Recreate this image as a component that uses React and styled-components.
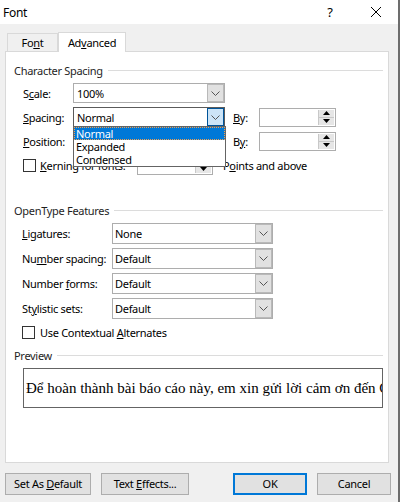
import React from "react";
import styled, { createGlobalStyle } from "styled-components";

const GlobalStyle = createGlobalStyle`
  html, body {
    margin: 0;
    padding: 0;
  }
  body {
    font-family: "Noto Sans", sans-serif;
    font-size: 11px;
    letter-spacing: -0.3px;
    color: #000;
    background: #f0f0f0;
  }
`;

const Window = styled.div`
  width: 400px;
  height: 502px;
  box-sizing: border-box;
  display: flex;
  flex-direction: column;
  background: #f0f0f0;
  border-right: 2px solid #6d6d6d;
  overflow: hidden;
`;

const TitleBar = styled.div`
  height: 24px;
  flex: none;
  background: #fff;
  display: flex;
  align-items: center;
  padding-left: 3px;
  font-size: 12px;
`;

const Title = styled.div`
  flex: 1;
`;

const HelpMark = styled.div`
  width: 10px;
  margin-right: 35px;
  text-align: center;
  font-size: 13px;
`;

const CloseMark = styled.div`
  width: 12px;
  height: 12px;
  margin-right: 16px;
  display: flex;
`;

const Body = styled.div`
  flex: 1;
  display: flex;
  flex-direction: column;
  padding: 8px 0 0 5px;
`;

const Tabs = styled.div`
  display: flex;
  align-items: flex-end;
  height: 20px;
  padding-left: 2px;
`;

const Tab = styled.div`
  position: relative;
  z-index: ${(p) => (p.$active ? 1 : 0)};
  box-sizing: border-box;
  width: ${(p) => p.$w}px;
  height: ${(p) => (p.$active ? 20 : 18)}px;
  margin-bottom: ${(p) => (p.$active ? 0 : 1)}px;
  border: 1px solid #d9d9d9;
  border-bottom: none;
  background: ${(p) => (p.$active ? "#fff" : "#f0f0f0")};
  display: flex;
  align-items: center;
  justify-content: center;
  padding-bottom: 1px;
`;

const Panel = styled.div`
  width: 384px;
  height: 412px;
  margin-top: -1px;
  box-sizing: border-box;
  border: 1px solid #d9d9d9;
  background: #fff;
  padding: 10px 5px 0 8px;
  display: flex;
  flex-direction: column;
`;

const SectionHead = styled.div`
  display: flex;
  align-items: center;
  gap: 5px;
  height: 16px;
  margin-top: ${(p) => p.$mt || 0}px;
  color: #1e1e1e;
  &::after {
    content: "";
    flex: 1;
    height: 1px;
    background: #dcdcdc;
  }
`;

const Fields = styled.div`
  display: flex;
  flex-direction: column;
  gap: ${(p) => p.$gap}px;
  margin: ${(p) => p.$mt}px 0 0 ${(p) => p.$ml}px;
`;

const Row = styled.div`
  display: flex;
  align-items: center;
  height: ${(p) => p.$h}px;
`;

const Label = styled.div`
  flex: none;
  width: ${(p) => p.$w}px;
  margin-left: ${(p) => p.$ml || 0}px;
  white-space: nowrap;
`;

const Key = styled.span`
  text-decoration: underline;
  text-underline-offset: 1px;
`;

const ComboWrap = styled.div`
  position: relative;
`;

const ComboBox = styled.div`
  width: ${(p) => p.$w}px;
  height: ${(p) => p.$h}px;
  box-sizing: border-box;
  border: 1px solid ${(p) => (p.$focus ? "#5a5a5a" : "#adadad")};
  background: #fff;
  display: flex;
  align-items: stretch;
`;

const ComboValue = styled.div`
  flex: 1;
  display: flex;
  align-items: center;
  padding-left: ${(p) => p.$pl || 3}px;
`;

const DropButton = styled.div`
  width: 17px;
  box-sizing: border-box;
  border: 1px solid ${(p) => (p.$focus ? "#005499" : "#b9b9b9")};
  background: ${(p) => (p.$focus ? "#cce4f7" : "#e1e1e1")};
  display: flex;
  align-items: center;
  justify-content: center;
`;

const DropList = styled.div`
  position: absolute;
  z-index: 2;
  left: 0;
  top: calc(100% - 1px);
  width: 153px;
  box-sizing: border-box;
  border: 1px solid #646464;
  background: #fff;
  display: flex;
  flex-direction: column;
`;

const DropItem = styled.div`
  height: 13px;
  line-height: 13px;
  padding-left: 2px;
  background: ${(p) => (p.$selected ? "#0078d7" : "transparent")};
  color: ${(p) => (p.$selected ? "#fff" : "#000")};
  outline: ${(p) => (p.$selected ? "1px dotted #f0a050" : "none")};
  outline-offset: -1px;
`;

const SpinBox = styled.div`
  width: ${(p) => p.$w}px;
  height: ${(p) => p.$h}px;
  box-sizing: border-box;
  border: 1px solid #adadad;
  background: #fff;
  display: flex;
  justify-content: flex-end;
  padding: 1px;
`;

const SpinButtons = styled.div`
  width: 15px;
  display: flex;
  flex-direction: column;
  border-left: 1px solid #c8c8c8;
`;

const SpinHalf = styled.div`
  flex: 1;
  background: #e6e6e6;
  display: flex;
  align-items: center;
  justify-content: center;
  & + & {
    border-top: 1px solid #c8c8c8;
  }
`;

const CheckBox = styled.div`
  flex: none;
  width: 13px;
  height: 13px;
  box-sizing: border-box;
  border: 1px solid #333;
  background: #fff;
  margin-right: ${(p) => p.$mr}px;
`;

const PreviewBox = styled.div`
  width: 360px;
  height: 40px;
  margin: 5px 0 0 9px;
  box-sizing: border-box;
  border: 1px solid #646464;
  overflow: hidden;
  white-space: nowrap;
  display: flex;
  align-items: center;
  padding: 1px 0 0 2px;
  font-family: "Liberation Serif", serif;
  font-size: 15px;
  letter-spacing: 0;
`;

const ButtonRow = styled.div`
  display: flex;
  align-items: center;
  width: 386px;
  margin-top: 10px;
  gap: 10px;
`;

const Spacer = styled.div`
  flex: 1;
`;

const Button = styled.div`
  width: ${(p) => p.$w}px;
  height: 22px;
  box-sizing: border-box;
  border: ${(p) => (p.$primary ? "2px solid #0078d7" : "1px solid #adadad")};
  background: #e1e1e1;
  display: flex;
  align-items: center;
  justify-content: center;
  padding-bottom: 1px;
  white-space: pre;
`;

const Chevron = () => (
  <svg width="9" height="5" viewBox="0 0 9 5">
    <polyline points="0.5,0.5 4.5,4.5 8.5,0.5" fill="none" stroke="#555" strokeWidth="1" />
  </svg>
);

const Arrow = ({ up }) => (
  <svg width="7" height="4" viewBox="0 0 7 4">
    <polygon points={up ? "0,4 7,4 3.5,0" : "0,0 7,0 3.5,4"} fill="#000" />
  </svg>
);

const Combo = ({ w, h = 20, value, focus, pl }) => (
  <ComboBox $w={w} $h={h} $focus={focus}>
    <ComboValue $pl={pl}>{value}</ComboValue>
    <DropButton $focus={focus}>
      <Chevron />
    </DropButton>
  </ComboBox>
);

const Spin = ({ w, h = 19 }) => (
  <SpinBox $w={w} $h={h}>
    <SpinButtons>
      <SpinHalf>
        <Arrow up />
      </SpinHalf>
      <SpinHalf>
        <Arrow />
      </SpinHalf>
    </SpinButtons>
  </SpinBox>
);

const openType = [
  { label: <><Key>L</Key>igatures:</>, value: "None" },
  { label: <>Nu<Key>m</Key>ber spacing:</>, value: "Default" },
  { label: <>Number <Key>f</Key>orms:</>, value: "Default" },
  { label: <>St<Key>y</Key>listic sets:</>, value: "Default" },
];

export default function App() {
  return (
    <>
      <GlobalStyle />
      <Window>
        <TitleBar>
          <Title>Font</Title>
          <HelpMark>?</HelpMark>
          <CloseMark>
            <svg width="12" height="12" viewBox="0 0 12 12">
              <path d="M1 1 L11 11 M11 1 L1 11" stroke="#000" strokeWidth="1" fill="none" />
            </svg>
          </CloseMark>
        </TitleBar>
        <Body>
          <Tabs>
            <Tab $w={51}>
              <span>
                Fo<Key>n</Key>t
              </span>
            </Tab>
            <Tab $w={68} $active>
              <span>
                Ad<Key>v</Key>anced
              </span>
            </Tab>
          </Tabs>
          <Panel>
            <SectionHead>Character Spacing</SectionHead>
            <Fields $mt={5} $ml={9} $gap={4}>
              <Row $h={20}>
                <Label $w={50}>
                  S<Key>c</Key>ale:
                </Label>
                <Combo w={152} value="100%" />
              </Row>
              <Row $h={20}>
                <Label $w={50}>
                  <Key>S</Key>pacing:
                </Label>
                <ComboWrap>
                  <Combo w={152} value="Normal" focus />
                  <DropList>
                    <DropItem $selected>Normal</DropItem>
                    <DropItem>Expanded</DropItem>
                    <DropItem>Condensed</DropItem>
                  </DropList>
                </ComboWrap>
                <Label $w={26} $ml={8}>
                  <Key>B</Key>y:
                </Label>
                <Spin w={77} />
              </Row>
              <Row $h={20}>
                <Label $w={50}>
                  <Key>P</Key>osition:
                </Label>
                <Combo w={152} value="" />
                <Label $w={26} $ml={8}>
                  B<Key>y</Key>:
                </Label>
                <Spin w={77} />
              </Row>
              <Row $h={20}>
                <CheckBox $mr={4} />
                <Label $w={97}>
                  <Key>K</Key>erning for fonts:
                </Label>
                <Spin w={76} h={20} />
                <Label $w={120} $ml={10}>
                  P<Key>o</Key>ints and above
                </Label>
              </Row>
            </Fields>

            <SectionHead $mt={27}>OpenType Features</SectionHead>
            <Fields $mt={5} $ml={8} $gap={4}>
              {openType.map((o, i) => (
                <Row $h={21} key={i}>
                  <Label $w={90}>{o.label}</Label>
                  <Combo w={161} h={21} value={o.value} pl={2} />
                </Row>
              ))}
              <Row $h={19}>
                <CheckBox $mr={5} />
                <Label $w={200}>
                  Use Contextual <Key>A</Key>lternates
                </Label>
              </Row>
            </Fields>

            <SectionHead $mt={5}>Preview</SectionHead>
            <PreviewBox>Để hoàn thành bài báo cáo này, em xin gửi lời cảm ơn đến Cô</PreviewBox>
          </Panel>
          <ButtonRow>
            <Button $w={86}>
              <span>
                Set As <Key>D</Key>efault
              </span>
            </Button>
            <Button $w={88}>
              <span>
                Text <Key>E</Key>ffects...
              </span>
            </Button>
            <Spacer />
            <Button $w={74} $primary>
              OK
            </Button>
            <Button $w={74}>Cancel</Button>
          </ButtonRow>
        </Body>
      </Window>
    </>
  );
}
